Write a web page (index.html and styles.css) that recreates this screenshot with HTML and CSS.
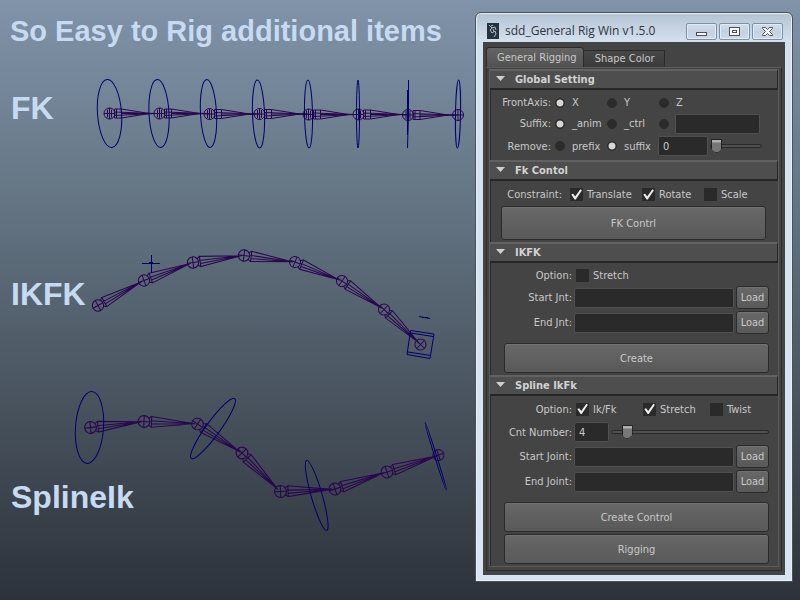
FILE: index.html
```html
<!DOCTYPE html>
<html lang="en">
<head>
<meta charset="utf-8">
<title>sdd_General Rig Win</title>
<link rel="stylesheet" href="styles.css">
</head>
<body>
<svg class="defs" aria-hidden="true">
  <defs>
    <g id="joint">
      <circle r="5.5"/>
      <path d="M-5.5 0H5.5M0-5.5V5.5"/>
    </g>
    <g id="bone">
      <use href="#joint"/>
      <path d="M7-5L47 0L7 5ZM4-3L7-5M4 3L7 5M6-1L48 0L7 2"/>
    </g>
    <g id="thin-bone">
      <use href="#joint"/>
      <path d="M-2-4V4M2-4V4M5-4.500H12V4.500H5ZM7-4.500V4.500M12-4.500L40 0L12 4.500M5-1.500L46 0L5 2M12 0H50"/>
    </g>
  </defs>
</svg>
<main class="stage">
  <div class="viewport">
    <h1 class="headline">So Easy to Rig additional items</h1>
    <section class="rig rig-fk">
      <h2 class="rig-name">FK</h2>
      <svg class="drawing" viewBox="0 60 470 150" aria-hidden="true">
        <g class="bones">
          <use href="#thin-bone" transform="translate(109.500 113.500)"/>
          <use href="#thin-bone" transform="translate(159.500 113.500)"/>
          <use href="#thin-bone" transform="translate(209.500 114)"/>
          <use href="#thin-bone" transform="translate(259.500 114)"/>
          <use href="#thin-bone" transform="translate(308.500 114.500)"/>
          <use href="#thin-bone" transform="translate(358.500 114.500)"/>
          <use href="#thin-bone" transform="translate(408 115)"/>
          <use href="#joint" transform="translate(458 115)"/>
        </g>
        <g class="curves">
          <ellipse cx="109.500" cy="113.500" rx="12" ry="34" transform="rotate(-4 109.500 113.500)"/>
          <ellipse cx="159" cy="113.500" rx="10" ry="34" transform="rotate(-3 159 113.500)"/>
          <ellipse cx="208.500" cy="113.500" rx="8" ry="34" transform="rotate(-3 208.500 113.500)"/>
          <ellipse cx="258.500" cy="114" rx="6" ry="34" transform="rotate(-2 258.500 114)"/>
          <ellipse cx="308.500" cy="114" rx="4" ry="34" transform="rotate(-1 308.500 114)"/>
          <ellipse cx="358" cy="114" rx="1.500" ry="34"/>
          <path d="M408.500 80V114L407.500 148M407.500 90V135"/>
          <ellipse cx="458" cy="114" rx="2.500" ry="34" transform="rotate(1 458 114)"/>
        </g>
      </svg>
    </section>
    <section class="rig rig-ikfk">
      <h2 class="rig-name">IKFK</h2>
      <svg class="drawing" viewBox="0 210 470 170" aria-hidden="true">
        <g class="bones">
          <use href="#bone" transform="translate(98 305.500) rotate(-28.700) scale(1.030)"/>
          <use href="#bone" transform="translate(144 280.500) rotate(-20.200) scale(1.030)"/>
          <use href="#bone" transform="translate(193 262.500) rotate(-8.100) scale(1.030)"/>
          <use href="#bone" transform="translate(244 255.500) rotate(7.500) scale(1.030)"/>
          <use href="#bone" transform="translate(295 262) rotate(22.100) scale(1.010)"/>
          <use href="#bone" transform="translate(342 281) rotate(34.300) scale(1.010)"/>
          <use href="#bone" transform="translate(384 309.500) rotate(43.700) scale(1.010)"/>
          <use href="#joint" transform="translate(420.500 344.500) rotate(43)"/>
        </g>
        <g class="curves">
          <path d="M142 263.500H160M151.500 255V273M149 262.500H153"/>
          <path d="M410.500 330.500L434 334L430 358.500L407 354.500ZM411 333L433 336.500M408 352L430.500 355.500"/>
          <path d="M419 316.500L430 318.500M422 317.500H428"/>
        </g>
      </svg>
    </section>
    <section class="rig rig-spline">
      <h2 class="rig-name">SplineIk</h2>
      <svg class="drawing" viewBox="0 380 470 220" aria-hidden="true">
        <g class="bones">
          <use href="#bone" transform="translate(90.500 427.500) rotate(-6.400) scale(1.070)"/>
          <use href="#bone" transform="translate(144 421.500) rotate(2.600) scale(1.070)"/>
          <use href="#bone" transform="translate(197.500 424) rotate(33.300) scale(1.060)"/>
          <use href="#bone" transform="translate(242 453) rotate(45.400) scale(1.070)"/>
          <use href="#bone" transform="translate(280.500 491.500) rotate(-2.400) scale(1.080)"/>
          <use href="#bone" transform="translate(335 489) rotate(-18.400) scale(1.080)"/>
          <use href="#bone" transform="translate(387 472) rotate(-17.900) scale(1.080)"/>
          <use href="#joint" transform="translate(438.500 455) rotate(-18)"/>
        </g>
        <g class="curves">
          <ellipse cx="89.500" cy="427.500" rx="14" ry="36" transform="rotate(4 89.500 427.500)"/>
          <ellipse cx="213" cy="428.500" rx="7" ry="37" transform="rotate(36 213 428.500)"/>
          <ellipse cx="316.700" cy="495.500" rx="5.500" ry="36.500" transform="rotate(-16 316.700 495.500)"/>
          <ellipse cx="435.700" cy="456.300" rx="1" ry="35.500" transform="rotate(-17.500 435.700 456.300)"/>
        </g>
      </svg>
    </section>
  </div>

  <aside class="window">
    <header class="titlebar">
      <svg class="app-icon" viewBox="0 0 12 16" aria-hidden="true">
        <rect class="icon-back" width="12" height="16"/>
        <path class="icon-line" d="M2 2L5 5L3 7L5 10L8 8L9 11L7 14M5 5L8 4L9 7M4 3L6 2M6 6L7 9"/>
      </svg>
      <span class="window-title">sdd_General Rig Win v1.5.0</span>
      <div class="window-buttons">
        <button class="window-button" type="button" aria-label="Minimize"><svg width="15" height="11" viewBox="0 0 15 11"><rect class="glyph" x="2.500" y="6.500" width="10" height="3"/></svg></button>
        <button class="window-button" type="button" aria-label="Maximize"><svg width="15" height="11" viewBox="0 0 15 11"><rect class="glyph" x="2.500" y="1.500" width="10" height="8"/><rect class="glyph" x="5.500" y="4.500" width="4" height="2"/></svg></button>
        <button class="window-button" type="button" aria-label="Close"><svg width="15" height="11" viewBox="0 0 15 11"><path class="glyph" d="M2.500 1.500H5.500L7.500 3.500L9.500 1.500H12.500V2.500L9.500 5.500L12.500 8.500V9.500H9.500L7.500 7.500L5.500 9.500H2.500V8.500L5.500 5.500L2.500 2.500Z"/></svg></button>
      </div>
    </header>
    <div class="window-body">
      <nav class="tabs" role="tablist">
        <button class="tab tab-active" type="button" role="tab" aria-selected="true">General Rigging</button>
        <button class="tab" type="button" role="tab" aria-selected="false">Shape Color</button>
      </nav>
      <form class="pane">
        <section class="group">
          <h3 class="group-title">Global Setting</h3>
          <div class="group-body">
            <div class="row row-global">
              <span class="caption">FrontAxis:</span>
              <label class="option"><input class="radio" type="radio" name="axis" checked>X</label>
              <label class="option"><input class="radio" type="radio" name="axis">Y</label>
              <label class="option"><input class="radio" type="radio" name="axis">Z</label>
            </div>
            <div class="row row-global">
              <span class="caption">Suffix:</span>
              <label class="option"><input class="radio" type="radio" name="suffix" checked>_anim</label>
              <label class="option"><input class="radio" type="radio" name="suffix">_ctrl</label>
              <div class="option custom">
                <input class="radio" type="radio" name="suffix" aria-label="Custom suffix">
                <input class="field" type="text" aria-label="Custom suffix text">
              </div>
            </div>
            <div class="row row-global row-remove">
              <span class="caption">Remove:</span>
              <label class="option"><input class="radio" type="radio" name="remove">prefix</label>
              <label class="option"><input class="radio" type="radio" name="remove" checked>suffix</label>
              <div class="amount">
                <input class="field" type="text" value="0" aria-label="Remove count">
                <input class="slider" type="range" min="0" max="10" value="0" aria-label="Remove count slider">
              </div>
            </div>
          </div>
        </section>
        <section class="group">
          <h3 class="group-title">Fk Contol</h3>
          <div class="group-body">
            <div class="row row-constraint">
              <span class="caption">Constraint:</span>
              <label class="option"><input class="check" type="checkbox" checked>Translate</label>
              <label class="option"><input class="check" type="checkbox" checked>Rotate</label>
              <label class="option"><input class="check" type="checkbox">Scale</label>
            </div>
            <button class="action action-fk" type="button">FK Contrl</button>
          </div>
        </section>
        <section class="group">
          <h3 class="group-title">IKFK</h3>
          <div class="group-body">
            <div class="row row-option">
              <span class="caption">Option:</span>
              <label class="option"><input class="check" type="checkbox">Stretch</label>
            </div>
            <div class="row row-load">
              <label class="caption" for="start-jnt">Start Jnt:</label>
              <input class="field" id="start-jnt" type="text">
              <button class="load" type="button">Load</button>
            </div>
            <div class="row row-load">
              <label class="caption" for="end-jnt">End Jnt:</label>
              <input class="field" id="end-jnt" type="text">
              <button class="load" type="button">Load</button>
            </div>
            <div class="actions">
              <button class="action" type="button">Create</button>
            </div>
          </div>
        </section>
        <section class="group">
          <h3 class="group-title">Spline IkFk</h3>
          <div class="group-body">
            <div class="row row-option row-option-spline">
              <span class="caption">Option:</span>
              <label class="option"><input class="check" type="checkbox" checked>Ik/Fk</label>
              <label class="option"><input class="check" type="checkbox" checked>Stretch</label>
              <label class="option"><input class="check" type="checkbox">Twist</label>
            </div>
            <div class="row row-count">
              <label class="caption" for="cnt-number">Cnt Number:</label>
              <input class="field" id="cnt-number" type="text" value="4">
              <input class="slider" type="range" min="0" max="60" value="4" aria-label="Cnt Number slider">
            </div>
            <div class="row row-load">
              <label class="caption" for="start-joint">Start Joint:</label>
              <input class="field" id="start-joint" type="text">
              <button class="load" type="button">Load</button>
            </div>
            <div class="row row-load">
              <label class="caption" for="end-joint">End Joint:</label>
              <input class="field" id="end-joint" type="text">
              <button class="load" type="button">Load</button>
            </div>
            <div class="actions">
              <button class="action" type="button">Create Control</button>
              <button class="action" type="button">Rigging</button>
            </div>
          </div>
        </section>
      </form>
    </div>
  </aside>
</main>
</body>
</html>
```
FILE: styles.css
```css
* { box-sizing: border-box; }

body {
  margin: 0;
  font-family: "DejaVu Sans Condensed", "Liberation Sans", sans-serif;
  font-size: 11px;
  color: #c8c8c8;
}

h1, h2, h3 { margin: 0; }

button, input { font: inherit; color: inherit; margin: 0; }

.defs { display: none; }

.stage {
  display: grid;
  grid-template-columns: minmax(0, 1fr) 318px;
  min-height: 100vh;
  padding-right: 7px;
  background: linear-gradient(#8093a9 0%, #677887 30%, #4e5a66 60%, #2d323b 100%);
}

/* Left: the drawings */
.viewport {
  display: flex;
  flex-direction: column;
  max-width: 470px;
  color: #c6daf1;
  font-family: "Liberation Sans", Arial, sans-serif;
}

.headline {
  height: 60px;
  padding: 13px 0 0 10px;
  font-size: 29px;
  line-height: 36px;
  white-space: nowrap;
}

.rig { display: grid; }

.rig-name, .drawing { grid-area: 1 / 1; }

.rig-name {
  padding-left: 11px;
  font-size: 32px;
  line-height: 40px;
}

.rig-fk .rig-name { padding-top: 28px; }
.rig-ikfk .rig-name { padding-top: 64px; }
.rig-spline .rig-name { padding-top: 97px; }

.drawing { width: 100%; display: block; fill: none; }
.bones { stroke: #2b0650; stroke-width: 1; }
.curves { stroke: #00006c; stroke-width: 1; }

/* Right: the tool window */
.window {
  align-self: start;
  margin-top: 12px;
  padding: 0 7px 6px;
  border: 1px solid #4e5055;
  border-radius: 6px 6px 0 0;
  background: linear-gradient(#b4c3d3, #d3e0ee 28px, #d8e4f2);
  box-shadow: inset 0 0 0 1px #e6eef7;
}

.titlebar {
  display: flex;
  align-items: center;
  height: 29px;
  padding: 7px 2px 0 4px;
}

.app-icon { width: 12px; height: 16px; }
.icon-back { fill: #27333c; }
.icon-line { fill: none; stroke: #a9bcc8; }

.window-title {
  flex: 1;
  padding-left: 6px;
  font-family: "Open Sans", "Noto Sans", sans-serif;
  font-size: 12px;
  line-height: 18px;
  color: #30353c;
  white-space: nowrap;
}

.window-buttons { display: flex; gap: 2px; }

.window-button {
  display: grid;
  place-items: center;
  width: 31px;
  height: 17px;
  padding: 0;
  border: 1px solid #7f90a6;
  border-radius: 2px;
  background: linear-gradient(#d2deeb, #c3d1e1 50%, #cddae8);
  box-shadow: inset 0 0 0 1px #e1eaf3;
}

.glyph { fill: #f7f9fb; stroke: #4b515d; }

.window-body { padding: 5px 3px 4px; background: #444; }

.tabs { display: flex; align-items: flex-end; }

.tab {
  height: 17px;
  padding: 0 9px 0 11px;
  border: 1px solid #2b2b2b;
  border-bottom: 0;
  border-left: 0;
  background: linear-gradient(#474747, #3b3b3b);
  line-height: 16px;
  white-space: nowrap;
}

.tab-active {
  height: 20px;
  padding: 0 6px 0 10px;
  border-left: 1px solid #2b2b2b;
  border-radius: 3px 3px 0 0;
  background: linear-gradient(#646464, #525252);
  line-height: 20px;
}

.pane {
  padding: 1px 2px 3px;
  border: 1px solid #2b2b2b;
  border-top-color: #5c5c5c;
  background: #444;
}

.group { border-left: 1px solid #5b5b5b; border-right: 1px solid #5b5b5b; }
.group:last-child { border-bottom: 1px solid #5b5b5b; }

.group-title {
  display: flex;
  align-items: center;
  height: 21px;
  padding-left: 6px;
  border-top: 2px solid #616161;
  border-bottom: 2px solid #262626;
  border-right: 1px solid #262626;
  background: #4e4e4e;
  font-size: 11px;
  color: #d2d2d2;
}

.group-title::before {
  content: "";
  width: 9px;
  height: 5px;
  margin: 0 10px 2px 0;
  background: #cfcfcf;
  clip-path: polygon(0 0, 100% 0, 50% 100%);
}

.group-body { padding: 2px 9px 2px 0; border-left: 1px solid #2b2b2b; }

.row { display: grid; align-items: center; height: 21px; }
.caption { text-align: right; white-space: nowrap; }

.option { display: flex; align-items: center; gap: 4px; white-space: nowrap; }

.row-global { grid-template-columns: 60px 52px 52px minmax(0, 1fr); }
.row-global .option { padding-left: 4px; gap: 7px; }
.row-remove { height: 24px; }

.radio {
  appearance: none;
  flex: none;
  width: 10px;
  height: 10px;
  border: 1px solid #2b2b2b;
  border-radius: 50%;
  background: #2b2b2b;
}

.radio:checked { background: radial-gradient(#d6d6d6 3px, #2b2b2b 4px); }

.check {
  appearance: none;
  flex: none;
  width: 13px;
  height: 13px;
  background: #2a2a2a;
}

.check:checked::before {
  content: "";
  display: block;
  width: 13px;
  height: 13px;
  background: #eee;
  clip-path: polygon(10% 50%, 24% 45%, 40% 66%, 80% 10%, 92% 18%, 44% 88%, 36% 88%);
}

.field {
  min-width: 0;
  width: 100%;
  height: 20px;
  padding: 0 4px;
  border: 1px solid #505050;
  border-radius: 2px;
  background: #2a2a2a;
}

.custom .field { width: 85px; }
.row-global .custom { gap: 6px; }

.amount {
  display: grid;
  grid-template-columns: 50px 52px;
  align-items: center;
  gap: 2px;
  padding-left: 3px;
}

.slider {
  appearance: none;
  width: 100%;
  min-width: 0;
  height: 16px;
  background: transparent;
}

.slider::-webkit-slider-runnable-track {
  height: 4px;
  border: 1px solid #292929;
  border-radius: 2px;
  background: #505050;
}

.slider::-webkit-slider-thumb {
  appearance: none;
  width: 11px;
  height: 14px;
  margin-top: -6px;
  border: 1px solid #222;
  background: linear-gradient(#b0b0b0 2px, #777 3px);
  clip-path: polygon(0 0, 100% 0, 100% 70%, 50% 100%, 0 70%);
}

.row-constraint {
  grid-template-columns: 71px 72px 62px minmax(0, 1fr);
  height: 23px;
}

.row-constraint .option { padding-left: 8px; }

.row-option { grid-template-columns: 81px 67px 67px minmax(0, 1fr); height: 20px; }
.row-option .option { padding-left: 4px; }
.row-option-spline { height: 22px; }

.row-load {
  grid-template-columns: 81px minmax(0, 1fr) 33px;
  column-gap: 2px;
  height: 25px;
}

.row-count { grid-template-columns: 81px 35px minmax(0, 1fr); column-gap: 2px; height: 24px; }

.load, .action {
  padding: 0;
  border: 1px solid #2b2b2b;
  border-radius: 3px;
  background: linear-gradient(#686868, #595959);
  box-shadow: inset 0 1px #727272;
}

.load { height: 23px; }

.actions { display: grid; gap: 2px; padding: 8px 0 0 13px; }

.action { width: 100%; height: 30px; }

.action-fk { display: block; width: calc(100% - 13px); height: 34px; margin-left: 10px; }
```
